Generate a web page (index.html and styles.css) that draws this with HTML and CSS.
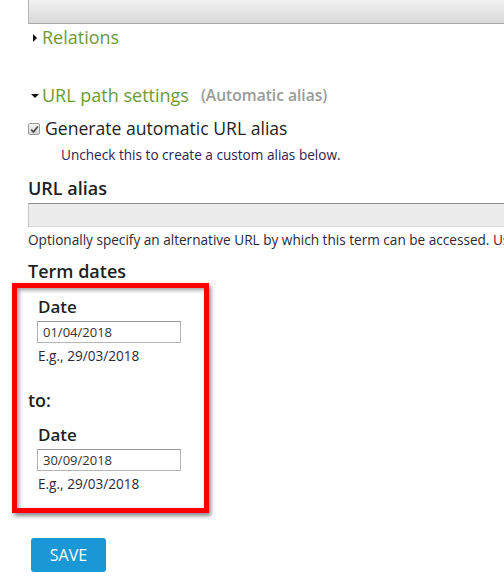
FILE: index.html
```html
<!DOCTYPE html>
<html>
<head>
<meta charset="utf-8">
<link rel="stylesheet" href="styles.css">
</head>
<body>
<div class="page">
  <div class="topbar"></div>
  <div class="fieldset-title collapsed"><span class="tri tri-right"></span><span class="legend">Relations</span></div>
  <div class="fieldset-title open"><span class="tri tri-down"></span><span class="legend">URL path settings</span><span class="summary">(Automatic alias)</span></div>
  <div class="check-row"><span class="checkbox"><svg width="9" height="9" viewBox="0 0 9 9"><path d="M1.2 4.6 L3.5 7 L7.8 1.6" fill="none" stroke="#444" stroke-width="1.6"/></svg></span><span class="check-label">Generate automatic URL alias</span></div>
  <div class="desc indent">Uncheck this to create a custom alias below.</div>
  <div class="label alias">URL alias</div>
  <div class="wide-input"></div>
  <div class="desc help">Optionally specify an alternative URL by which this term can be accessed. Use a relative path.</div>
  <div class="label term">Term dates</div>
  <div class="date-group">
    <div class="label small">Date</div>
    <div class="date-input">01/04/2018</div>
    <div class="desc eg">E.g., 29/03/2018</div>
  </div>
  <div class="label to">to:</div>
  <div class="date-group second">
    <div class="label small">Date</div>
    <div class="date-input">30/09/2018</div>
    <div class="desc eg">E.g., 29/03/2018</div>
  </div>
  <div class="button-row"><span class="save">SAVE</span></div>
  <div class="annotation"></div>
</div>
</body>
</html>
```
FILE: styles.css
```css
html, body {
  margin: 0;
  padding: 0;
  background: #fff;
}
body {
  font-family: "Open Sans", "DejaVu Sans", sans-serif;
  color: #1f1f1f;
  width: 504px;
  height: 576px;
  overflow: hidden;
}
.page {
  position: relative;
  padding-left: 28px;
  height: 576px;
  overflow: hidden;
}
.topbar {
  height: 23px;
  border-left: 1px solid #b5b5b5;
  border-bottom: 1px solid #a9a9a9;
  background: linear-gradient(#f2f2f2, #d9d9d9);
  margin-right: -20px;
}
.fieldset-title {
  display: flex;
  align-items: center;
  font-size: 18px;
  line-height: 24px;
  height: 24px;
  white-space: nowrap;
}
.collapsed { margin-top: 1px; }
.open { margin-top: 34px; }
.tri {
  display: inline-block;
  width: 0;
  height: 0;
  margin-left: 5px;
  margin-right: 5px;
}
.tri-right {
  border-top: 4px solid transparent;
  border-bottom: 4px solid transparent;
  border-left: 4px solid #111;
  margin-top: 2px;
}
.tri-down {
  border-left: 4px solid transparent;
  border-right: 4px solid transparent;
  border-top: 4px solid #111;
  margin-left: 3px;
  margin-right: 3px;
  margin-top: 2px;
}
.legend {
  color: #6c9a37;
}
.summary {
  color: #9a9a9a;
  font-weight: 600;
  font-size: 15.6px;
  margin-left: 12px;
}
.check-row {
  display: flex;
  align-items: center;
  margin-top: 9px;
  height: 24px;
}
.checkbox {
  width: 10px;
  height: 10px;
  border: 1px solid #9c9c9c;
  border-radius: 2px;
  background: linear-gradient(#f4f4f4, #d6d6d6);
  display: flex;
  align-items: center;
  justify-content: center;
  margin-top: 2px;
}
.check-label {
  font-size: 17.6px;
  line-height: 24px;
  margin-left: 5px;
}
.desc {
  font-size: 13.6px;
  line-height: 18px;
  color: #2a2a3a;
  white-space: nowrap;
}
.indent {
  margin-left: 33px;
  margin-top: 6px;
  color: #2d2350;
}
.label {
  font-weight: 600;
  font-size: 18px;
  line-height: 24px;
}
.alias {
  margin-top: 12px;
}
.wide-input {
  height: 22px;
  margin-top: 3px;
  margin-right: -20px;
  background: #ececec;
  border-top: 1px solid #8e8e8e;
  border-left: 1px solid #c8c8c8;
  border-bottom: 1px solid #d4d4d4;
}
.help {
  margin-top: 4px;
}
.term {
  margin-top: 10px;
}
.date-group {
  padding-left: 10px;
  margin-top: 14px;
}
.date-group.second {
  margin-top: 13px;
}
.small {
  font-size: 17px;
  line-height: 20px;
}
.date-input {
  width: 137px;
  height: 20px;
  border: 1px solid #b5b5b5;
  border-top-color: #9a9a9a;
  font-size: 13px;
  line-height: 20px;
  padding-left: 5px;
  color: #333;
  margin-top: 4px;
  margin-left: -1px;
}
.eg {
  margin-top: 4px;
}
.to {
  margin-top: 23px;
}
.button-row {
  margin-top: 45px;
  display: flex;
}
.save {
  display: flex;
  align-items: center;
  justify-content: center;
  width: 75px;
  height: 34px;
  margin-left: 3px;
  background: #1a97d5;
  border-radius: 3px;
  color: #fff;
  font-size: 16px;
}
.annotation {
  position: absolute;
  left: 12px;
  top: 283px;
  width: 187px;
  height: 220px;
  border: 5px solid #ff0000;
  box-shadow: 2px 3px 4px rgba(0,0,0,0.45), inset 2px 2px 4px rgba(0,0,0,0.4);
}
```
